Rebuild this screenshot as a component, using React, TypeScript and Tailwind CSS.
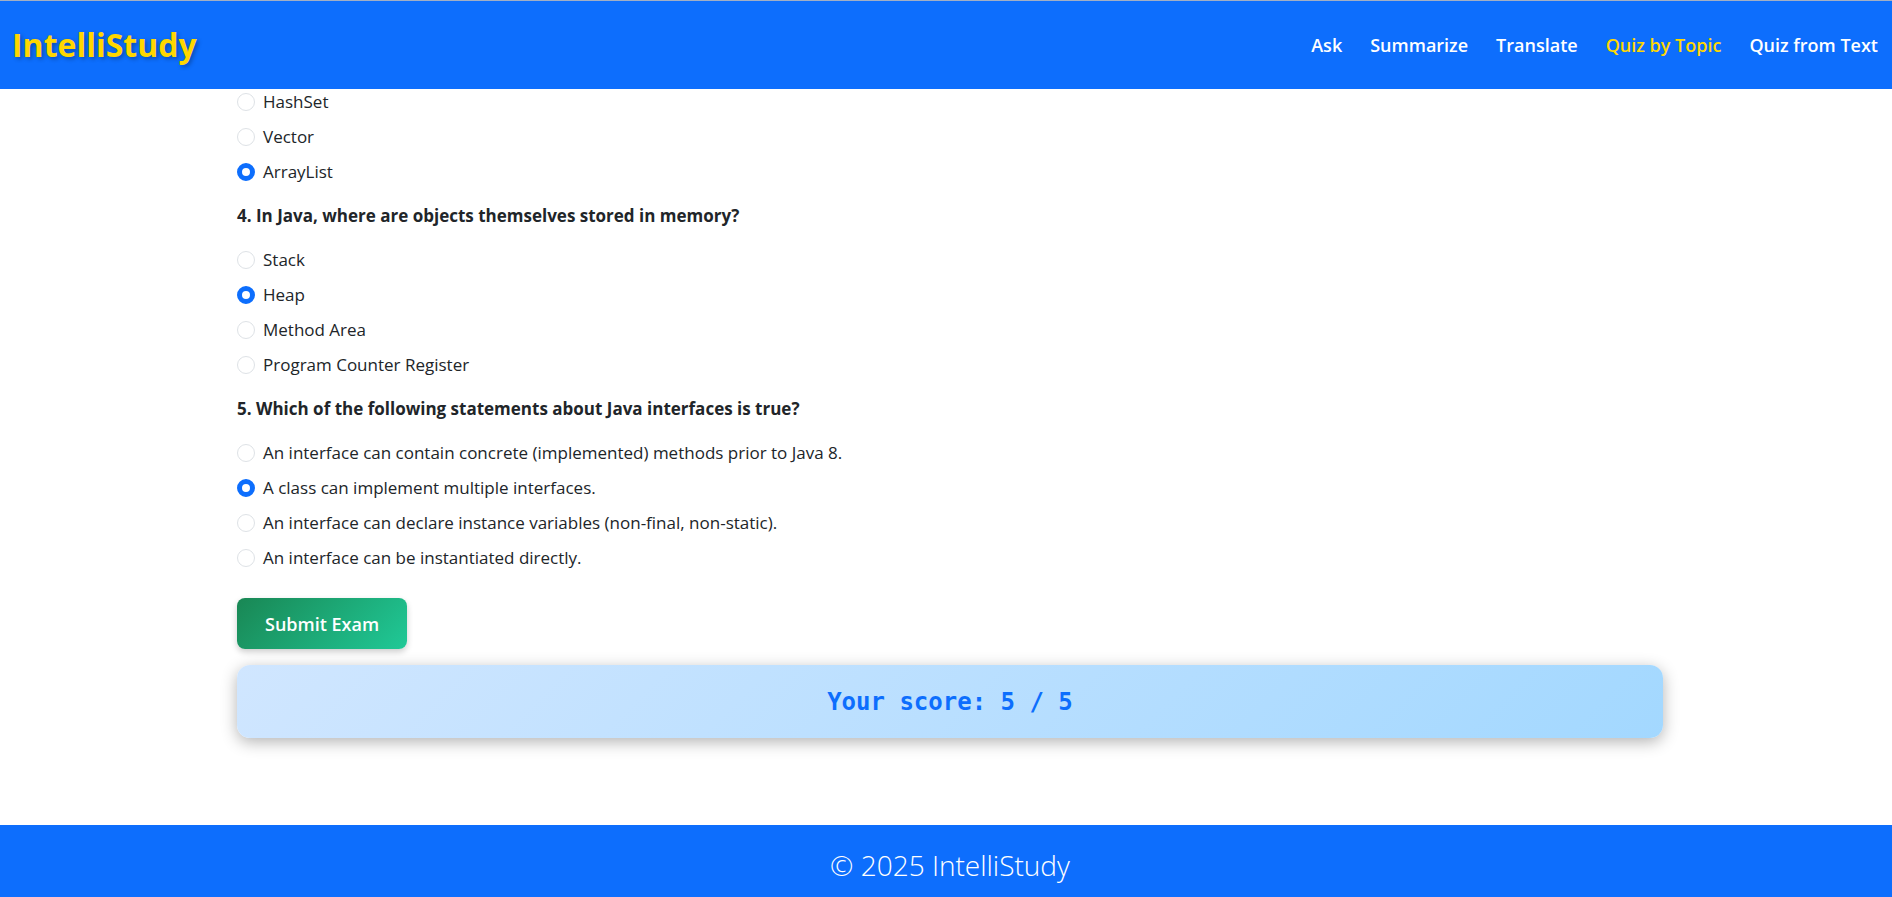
import { useState } from "react";

const links = ["Ask", "Summarize", "Translate", "Quiz by Topic", "Quiz from Text"];

type QuestionData = { id: string; title?: string; options: string[]; answer: string };

const questions: QuestionData[] = [
  { id: "q3", options: ["HashSet", "Vector", "ArrayList"], answer: "ArrayList" },
  {
    id: "q4",
    title: "4. In Java, where are objects themselves stored in memory?",
    options: ["Stack", "Heap", "Method Area", "Program Counter Register"],
    answer: "Heap",
  },
  {
    id: "q5",
    title: "5. Which of the following statements about Java interfaces is true?",
    options: [
      "An interface can contain concrete (implemented) methods prior to Java 8.",
      "A class can implement multiple interfaces.",
      "An interface can declare instance variables (non-final, non-static).",
      "An interface can be instantiated directly.",
    ],
    answer: "A class can implement multiple interfaces.",
  },
];

function Question({ id, title, options, answer }: QuestionData) {
  const [value, setValue] = useState(answer);
  return (
    <div role="radiogroup" aria-labelledby={title ? `${id}-title` : undefined}>
      {title && (
        <p id={`${id}-title`} className="flex min-h-[53px] items-center font-bold">
          {title}
        </p>
      )}
      {options.map((option) => (
        <label key={option} className="flex min-h-[35px] w-fit items-center gap-2">
          <input
            type="radio"
            name={id}
            value={option}
            checked={value === option}
            onChange={() => setValue(option)}
            className="size-[18px] shrink-0 appearance-none rounded-full border border-[#dee2e6] bg-white checked:border-[5px] checked:border-[#0d6efd]"
          />
          <span>{option}</span>
        </label>
      ))}
    </div>
  );
}

export default function App() {
  return (
    <div className="flex min-h-screen flex-col bg-white font-['Open_Sans','Noto_Sans',sans-serif] text-[17px] leading-[26px] text-[#212529]">
      <header className="sticky top-0 z-10 flex min-h-[89px] items-center justify-between border-t border-[#a3afc4] bg-[#0d6efd] pr-3.5 pl-3">
        <a href="#" className="text-[32px] leading-[48px] font-bold text-[#ffd700] [text-shadow:2px_2px_4px_rgba(0,0,0,0.3)]">
          IntelliStudy
        </a>
        <nav className="flex gap-7 text-[18px] font-semibold">
          {links.map((link) => (
            <a key={link} href="#" className={link === "Quiz by Topic" ? "text-[#ffd700]" : "text-white"}>
              {link}
            </a>
          ))}
        </nav>
      </header>
      <main className="-mt-[5px] flex-1 pr-4 pb-[86px] pl-6">
        <div className="mx-auto max-w-[1426px]">
          {questions.map((q) => (
            <Question key={q.id} {...q} />
          ))}
          <button
            type="button"
            className="mt-[23px] flex h-[51px] items-center rounded-lg bg-[linear-gradient(135deg,#198754,#20c997)] px-7 text-[18px] font-semibold text-white shadow-[0_3px_6px_rgba(0,0,0,0.2)]"
          >
            Submit Exam
          </button>
          <div className="mt-4 flex min-h-[73px] items-center justify-center rounded-[13px] bg-[linear-gradient(135deg,#d0e6ff,#a3d8ff)] px-4 font-['DejaVu_Sans_Mono',monospace] text-[24px] font-bold text-[#0d6efd] shadow-[0_4px_16px_rgba(0,0,0,0.3)]">
            Your score: 5 / 5
          </div>
        </div>
      </main>
      <footer className="flex min-h-[72px] items-center justify-center bg-[#0d6efd] pt-2 pr-4 pl-6 text-[28px] leading-[42px] font-light text-white">
        © 2025 IntelliStudy
      </footer>
    </div>
  );
}
